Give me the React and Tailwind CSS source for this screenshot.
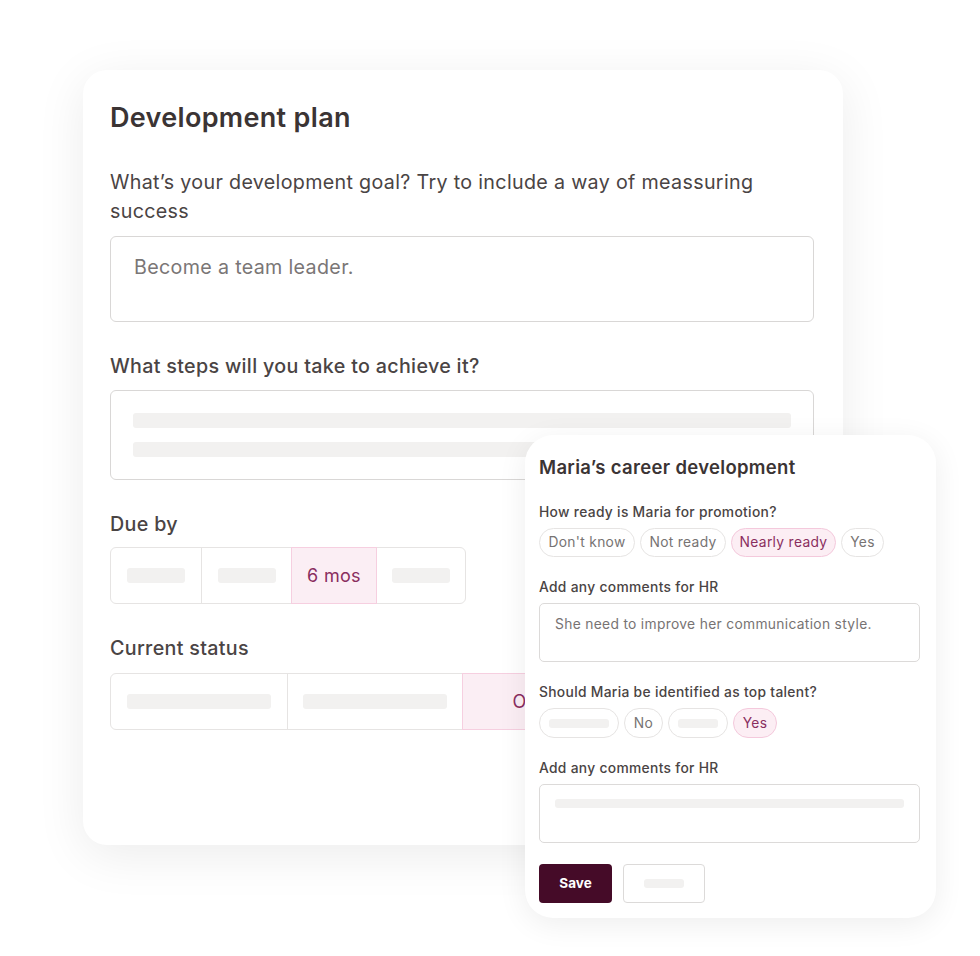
import React from 'react';

const font = { fontFamily: 'Inter, "Noto Sans", sans-serif' };

function Bar({ className }) {
  return <div className={`rounded-[3px] bg-[#f2f1f0] ${className}`} />;
}

function Segments({ cells }) {
  return (
    <div className="flex h-[57px] rounded-[6px] border border-[#e6e4e3] bg-white">
      {cells.map((c, i) => (
        <div
          key={i}
          className={`flex items-center justify-center ${c.w} ${
            c.active
              ? 'bg-[#fbeef4] border border-[#f6cfe0] -my-px text-[#8a2e5f]'
              : i > 0 && !cells[i - 1].active
              ? 'border-l border-[#e6e4e3]'
              : ''
          }`}
        >
          {c.label ? (
            <span className="text-[18px]">{c.label}</span>
          ) : (
            <Bar className={`h-[15px] ${c.bar}`} />
          )}
        </div>
      ))}
    </div>
  );
}

function Pill({ children, active, w, bar }) {
  return (
    <div
      className={`flex h-full ${w} items-center justify-center rounded-full border text-[13.8px] ${
        active
          ? 'border-[#f4c9dc] bg-[#fceef4] text-[#8a2e5f]'
          : 'border-[#e6e4e3] bg-white text-[#777373]'
      }`}
    >
      {bar ? <Bar className={`h-[9px] ${bar}`} /> : children}
    </div>
  );
}

function CareerCard() {
  return (
    <div className="absolute left-[525px] top-[435px] h-[483px] w-[411px] rounded-[28px] bg-white px-[14px] pt-[21px] shadow-[0_6px_30px_rgba(0,0,0,0.07)]">
      <h2 className="text-[18.5px] font-semibold leading-[22px] text-[#3b3434]">Maria’s career development</h2>

      <p className="mt-[25px] text-[13.8px] font-medium leading-[18px] text-[#4a4444]">How ready is Maria for promotion?</p>
      <div className="mt-[7px] flex h-[29px] gap-[5px]">
        <Pill w="w-[96px]">Don't know</Pill>
        <Pill w="w-[86px]">Not ready</Pill>
        <Pill w="w-[105px]" active>Nearly ready</Pill>
        <Pill w="w-[43px]">Yes</Pill>
      </div>

      <p className="mt-[21px] text-[13.8px] font-medium leading-[18px] text-[#4a4444]">Add any comments for HR</p>
      <div className="mt-[7px] h-[59px] w-[381px] rounded-[5px] border border-[#dcdad9] px-[15px] pt-[11px] text-[13.8px] leading-[18px] text-[#777373]">
        She need to improve her communication style.
      </div>

      <p className="mt-[21px] text-[13.8px] font-medium leading-[18px] text-[#4a4444]">Should Maria be identified as top talent?</p>
      <div className="mt-[7px] flex h-[30px] gap-[5px]">
        <Pill w="w-[80px]" bar="w-[60px]" />
        <Pill w="w-[39px]">No</Pill>
        <Pill w="w-[60px]" bar="w-[40px]" />
        <Pill w="w-[44px]" active>Yes</Pill>
      </div>

      <p className="mt-[21px] text-[13.8px] font-medium leading-[18px] text-[#4a4444]">Add any comments for HR</p>
      <div className="mt-[7px] h-[59px] w-[381px] rounded-[5px] border border-[#dcdad9] px-[15px] pt-[14px]">
        <Bar className="h-[9px] w-full" />
      </div>

      <div className="mt-[21px] flex gap-[11px]">
        <button className="h-[39px] w-[73px] rounded-[4px] bg-[#450b28] text-[13.5px] font-bold tracking-normal text-white">Save</button>
        <div className="flex h-[39px] w-[82px] items-center justify-center rounded-[4px] border border-[#dcdad9] bg-white">
          <Bar className="h-[9px] w-[40px] bg-[#ebe9e8]" />
        </div>
      </div>
    </div>
  );
}

export default function App() {
  return (
    <div className="relative h-[956px] w-[980px] overflow-hidden bg-white pl-[83px] pt-[70px] tracking-[0.02em]" style={font}>
      <div className="h-[775px] w-[760px] rounded-[24px] bg-white px-[27px] pt-[32px] shadow-[0_10px_50px_rgba(0,0,0,0.08)]">
        <h1 className="text-[27px] font-semibold leading-[32px] text-[#3b3434]">Development plan</h1>

        <p className="mt-[34px] w-[704px] text-[19.7px] leading-[29px] text-[#4a4444]">
          What’s your development goal? Try to include a way of meassuring success
        </p>
        <div className="mt-[10px] h-[86px] w-[704px] rounded-[6px] border border-[#d9d7d6] px-[23px] pt-[17px] text-[19.7px] leading-[26px] text-[#7a7676]">
          Become a team leader.
        </div>

        <p className="mt-[30px] text-[19.7px] font-medium leading-[29px] text-[#4a4444]">What steps will you take to achieve it?</p>
        <div className="mt-[9px] flex h-[90px] w-[704px] flex-col gap-[14px] rounded-[6px] border border-[#d9d7d6] px-[22px] pt-[22px]">
          <Bar className="h-[15px] w-full" />
          <Bar className="h-[15px] w-full" />
        </div>

        <p className="mt-[30px] text-[19.7px] font-medium leading-[29px] text-[#4a4444]">Due by</p>
        <div className="mt-[8px] w-[356px]">
          <Segments
            cells={[
              { w: 'w-[90px]', bar: 'w-[58px]' },
              { w: 'w-[90px]', bar: 'w-[58px]' },
              { w: 'w-[86px]', label: '6 mos', active: true },
              { w: 'flex-1', bar: 'w-[58px]' },
            ]}
          />
        </div>

        <p className="mt-[30px] text-[19.7px] font-medium leading-[29px] text-[#4a4444]">Current status</p>
        <div className="mt-[10px] w-[704px]">
          <Segments
            cells={[
              { w: 'w-[176px]', bar: 'w-[144px]' },
              { w: 'w-[175px]', bar: 'w-[144px]' },
              { w: 'w-[176px]', label: 'On track', active: true },
              { w: 'flex-1', bar: 'w-[144px]' },
            ]}
          />
        </div>
      </div>

      <CareerCard />
    </div>
  );
}
